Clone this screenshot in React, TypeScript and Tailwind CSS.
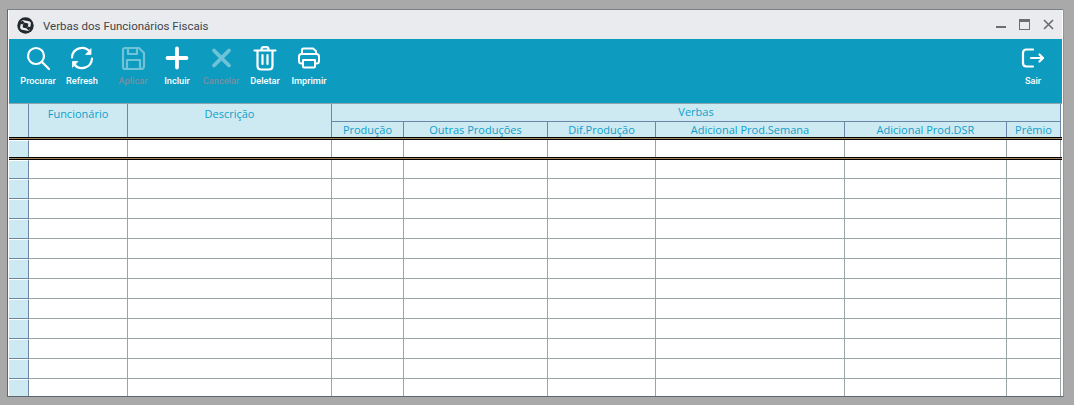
import React from "react";

const COLS = "grid grid-cols-[20px_99px_204px_72px_144px_108px_189px_162px_54px]";
const HEAD = "text-[#0d9fc9]";

function Icon({ children, dim }: { children: React.ReactNode; dim?: boolean }) {
  return (
    <svg width="26" height="26" viewBox="0 0 26 26" fill="none" stroke="#ffffff" strokeWidth="2.2" strokeLinecap="round" strokeLinejoin="round" opacity={dim ? 0.4 : 1}>
      {children}
    </svg>
  );
}

function Btn({ label, dim, icon, className = "" }: { label: string; dim?: boolean; icon: React.ReactNode; className?: string }) {
  return (
    <div className={`flex w-[44px] flex-col items-center ${className}`}>
      <div className="flex h-[26px] items-center justify-center">{icon}</div>
      <div className={`mt-[3px] pt-[1px] whitespace-nowrap text-[9.2px] leading-[12px] font-medium ${dim ? "text-[#7a8fa0]" : "text-white"}`} style={{ fontFamily: "Roboto, sans-serif" }}>{label}</div>
    </div>
  );
}

function Row({ h, lined }: { h: string; lined?: boolean }) {
  const cells = [0, 1, 2, 3, 4, 5, 6, 7];
  return (
    <div className={`${COLS} ${h} shrink-0`}>
      <div className={`border-r border-t border-r-[#6b87a8] border-t-white bg-[#cdeaf3] ${lined ? "border-b border-b-[#6b87a8]" : ""}`} />
      {cells.map((c) => (
        <div key={c} className={`border-r border-[#9aa5a8] bg-white ${lined ? "border-b" : ""}`} />
      ))}
    </div>
  );
}

function Sep() {
  return <div className="h-[3px] shrink-0 bg-[linear-gradient(#000_0,#000_33%,#a5835f_33%,#a5835f_66%,#000_66%)]" />;
}

export default function App() {
  return (
    <div className="h-[405px] w-[1074px] overflow-hidden bg-[#a9a9a9] pt-[9px] pl-[7px]" style={{ fontFamily: '"Open Sans", "Noto Sans", sans-serif' }}>
      <div className="flex h-[388px] w-[1057px] flex-col rounded-tr-[2px] border border-t-[#7a8088] border-r-[#8f959c] border-b-[#5f666e] border-l-[#5f666e] bg-white pr-px pl-px">
        <div className="flex h-[29px] shrink-0 items-center bg-[#e9ebef] pt-[2px] pr-[8px] pl-[8px]">
          <svg width="17" height="17" viewBox="0 0 17 17">
            <circle cx="8.5" cy="8.5" r="8.2" fill="#23282d" />
            <rect x="3.6" y="3.6" width="9.8" height="9.8" rx="2.2" fill="#e9ebef" transform="rotate(12 8.5 8.5)" />
            <rect x="6" y="6" width="5" height="5" rx="1" fill="#23282d" transform="rotate(12 8.5 8.5)" />
            <path d="M3 6.5 L5.5 3.5 L7.5 5.5 L5.5 7.5 Z" fill="#23282d" />
            <path d="M14 10.5 L11.5 13.5 L9.5 11.5 L11.5 9.5 Z" fill="#23282d" />
          </svg>
          <div className="ml-[9px] text-[11.5px] leading-[16px] text-[#3f434a]" style={{ fontFamily: "Roboto, sans-serif" }}>Verbas dos Funcionários Fiscais</div>
          <div className="-mt-[2px] ml-auto flex items-center gap-[13px]">
            <div className="mt-[5px] h-[2px] w-[10px] bg-[#6e6e6e]" />
            <div className="h-[11px] w-[11px] border border-t-[3px] border-[#6e6e6e]" />
            <svg width="11" height="11" viewBox="0 0 11 11" stroke="#6e6e6e" strokeWidth="1.7">
              <path d="M1 1 L10 10 M10 1 L1 10" />
            </svg>
          </div>
        </div>

        <div className="flex h-[64px] shrink-0 bg-[#0e9bc0] pt-[6px] pl-[7px]">
          <Btn label="Procurar" icon={<Icon><circle cx="11" cy="11" r="8" /><path d="M17 17 L24 24" /></Icon>} />
          <Btn label="Refresh" icon={<Icon><path d="M3 12.5 A10 10 0 0 1 21 7" /><path d="M22 4 V9.5 H17 Z" fill="#fff" strokeWidth="0.8" /><path d="M23 13.5 A10 10 0 0 1 5 19" /><path d="M3.5 22 V16.5 H8.5 Z" fill="#fff" strokeWidth="0.8" /></Icon>} />
          <Btn label="Aplicar" dim className="ml-[7px]" icon={<Icon dim><path d="M3 5 Q3 3 5 3 H19 L24 8 V21 Q24 24 21 24 H5 Q3 24 3 22 Z" /><path d="M8 3 V9 H17 V3" /><path d="M7 24 V15 H20 V24" /></Icon>} />
          <Btn label="Incluir" icon={<svg width="26" height="26" viewBox="0 0 26 26" stroke="#fff" strokeWidth="3.8" strokeLinecap="round"><path d="M13 3.5 V22.5 M3.5 13 H22.5" /></svg>} />
          <Btn label="Cancelar" dim icon={<svg width="26" height="26" viewBox="0 0 26 26" stroke="#fff" strokeWidth="3.8" strokeLinecap="round" opacity="0.4"><path d="M6 5.5 L21 20.5 M21 5.5 L6 20.5" /></svg>} />
          <Btn label="Deletar" icon={<Icon><path d="M2.5 5.5 H23.5" /><path d="M9.5 4.5 Q9.5 2.2 11.5 2.2 H14.5 Q16.5 2.2 16.5 4.5" /><path d="M5.5 6 V21 Q5.5 24.5 9 24.5 H17 Q20.5 24.5 20.5 21 V6" /><path d="M10.5 10 V19 M15.5 10 V19" /></Icon>} />
          <Btn label="Imprimir" icon={<svg width="26" height="26" viewBox="0 0 26 26" fill="none" stroke="#fff" strokeWidth="2" strokeLinecap="round" strokeLinejoin="round"><path d="M6 9 V5 Q6 3.5 7.5 3.5 H17 L20 6 V9" /><path d="M6.5 18.5 H5.5 Q3 18.5 3 16 V11.5 Q3 9 5.5 9 H20.5 Q23 9 23 11.5 V16 Q23 18.5 20.5 18.5 H19.5" /><path d="M7 15 H19 V21.5 Q19 22.5 18 22.5 H8 Q7 22.5 7 21.5 Z" /></svg>} />
          <Btn label="Sair" className="mr-[7px] ml-auto" icon={<Icon><path d="M13 4.5 H6.5 Q3 4.5 3 8 V18 Q3 21.5 6.5 21.5 H13" /><path d="M11 13 H23" /><path d="M19.5 9.5 L23 13 L19.5 16.5" /></Icon>} />
        </div>

        <div className="flex min-h-0 flex-1 flex-col overflow-hidden">
          <div className="relative z-10 flex h-[34px] shrink-0 border-t border-[#8fa3b0]">
            <div className="h-[33px] w-[20px] border-r border-[#6b87a8] bg-[#cdeaf3]" />
            <div className={`h-[33px] w-[99px] border-r border-[#6b87a8] bg-[#cdeaf3] pt-[2px] text-center text-[11px] leading-[15px] ${HEAD}`}>Funcionário</div>
            <div className={`h-[33px] w-[204px] border-r border-[#6b87a8] bg-[#cdeaf3] pt-[2px] text-center text-[11px] leading-[15px] ${HEAD}`}>Descrição</div>
            <div className="flex w-[729px] flex-col">
              <div className={`h-[18px] border-r border-b border-[#6b87a8] bg-[#cdeaf3] text-center text-[11px] leading-[16px] ${HEAD}`}>Verbas</div>
              <div className="grid h-[15px] grid-cols-[72px_144px_108px_189px_162px_54px]">
                {["Produção", "Outras Produções", "Dif.Produção", "Adicional Prod.Semana", "Adicional Prod.DSR", "Prêmio"].map((t) => (
                  <div key={t} className={`border-r border-[#6b87a8] bg-[#cdeaf3] text-center text-[11px] leading-[15px] whitespace-nowrap ${HEAD}`}>{t}</div>
                ))}
              </div>
            </div>
          </div>
          <Sep />
          <Row h="h-[17px]" />
          <Sep />
          <Row h="h-[19px]" lined />
          {Array.from({ length: 11 }).map((_, i) => (
            <Row key={i} h="h-[20px]" lined />
          ))}
        </div>
      </div>
    </div>
  );
}
